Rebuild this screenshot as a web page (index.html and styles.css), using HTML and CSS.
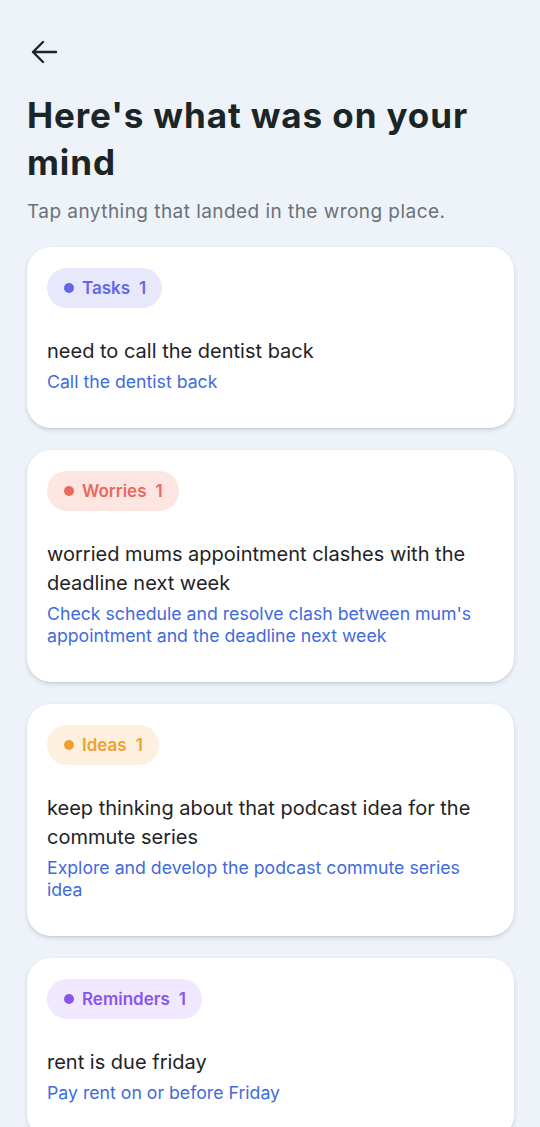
FILE: index.html
```html
<!DOCTYPE html>
<html lang="en">
<head>
<meta charset="utf-8">
<meta name="viewport" content="width=device-width, initial-scale=1">
<title>Here's what was on your mind</title>
<link rel="stylesheet" href="styles.css">
</head>
<body>
<main class="screen">
  <button class="back" aria-label="Back">
    <svg width="28" height="24" viewBox="0 0 28 24" fill="none" stroke="#1c2526" stroke-width="2.4" stroke-linecap="round" stroke-linejoin="round">
      <path d="M26 12H3M13 2L3 12l10 10"/>
    </svg>
  </button>
  <h1 class="title">Here's what was on your mind</h1>
  <p class="subtitle">Tap anything that landed in the wrong place.</p>

  <section class="cards">
    <article class="card">
      <span class="pill pill-tasks"><span class="dot"></span>Tasks<span class="count">1</span></span>
      <p class="raw">need to call the dentist back</p>
      <p class="action">Call the dentist back</p>
    </article>
    <article class="card">
      <span class="pill pill-worries"><span class="dot"></span>Worries<span class="count">1</span></span>
      <p class="raw">worried mums appointment clashes with the deadline next week</p>
      <p class="action">Check schedule and resolve clash between mum's appointment and the deadline next week</p>
    </article>
    <article class="card">
      <span class="pill pill-ideas"><span class="dot"></span>Ideas<span class="count">1</span></span>
      <p class="raw">keep thinking about that podcast idea for the commute series</p>
      <p class="action">Explore and develop the podcast commute series idea</p>
    </article>
    <article class="card">
      <span class="pill pill-reminders"><span class="dot"></span>Reminders<span class="count">1</span></span>
      <p class="raw">rent is due friday</p>
      <p class="action">Pay rent on or before Friday</p>
    </article>
  </section>
</main>
</body>
</html>
```
FILE: styles.css
```css
* { box-sizing: border-box; }
html, body {
  margin: 0;
  padding: 0;
  background: #eef2f9;
}
body {
  font-family: Inter, "Noto Sans", "Liberation Sans", sans-serif;
  color: #1c2526;
}
.screen {
  padding: 40px 26px 40px 27px;
}
.back {
  display: block;
  background: none;
  border: 0;
  padding: 0;
  margin: 0 0 0 3px;
  width: 28px;
  height: 24px;
  cursor: pointer;
}
.back svg { display: block; }
.title {
  margin: 28px 0 0;
  font-size: 35px;
  line-height: 47px;
  font-weight: 700;
  letter-spacing: 0.9px;
  color: #1c2526;
}
.subtitle {
  margin: 12px 0 0;
  font-size: 19px;
  line-height: 28px;
  letter-spacing: 0.45px;
  color: #6b7178;
}
.cards {
  margin-top: 21px;
  display: flex;
  flex-direction: column;
  gap: 22px;
}
.card {
  background: #ffffff;
  border-radius: 24px;
  padding: 21px 20px 35px 20px;
  box-shadow: 0 2px 4px rgba(40, 50, 80, 0.16), 0 1px 1px rgba(40, 50, 80, 0.06);
  display: flex;
  flex-direction: column;
  align-items: flex-start;
}
.pill {
  display: inline-flex;
  align-items: center;
  height: 40px;
  padding: 0 16px 0 17px;
  border-radius: 20px;
  font-size: 17px;
  font-weight: 600;
}
.dot {
  width: 10px;
  height: 10px;
  border-radius: 50%;
  background: currentColor;
  margin-right: 8px;
}
.count { margin-left: 9px; }
.pill-tasks { background: #e7e8fc; color: #6466e9; }
.pill-worries { background: #fde5e1; color: #e86a5c; }
.pill-ideas { background: #fef0df; color: #f0a02f; }
.pill-reminders { background: #f0e8fd; color: #8a55ee; }
.raw {
  margin: 29px 0 0;
  font-size: 20px;
  line-height: 29px;
  color: #1f2325;
}
.action {
  margin: 5px 0 0;
  font-size: 17.7px;
  line-height: 22px;
  color: #3f6ae0;
}
```
